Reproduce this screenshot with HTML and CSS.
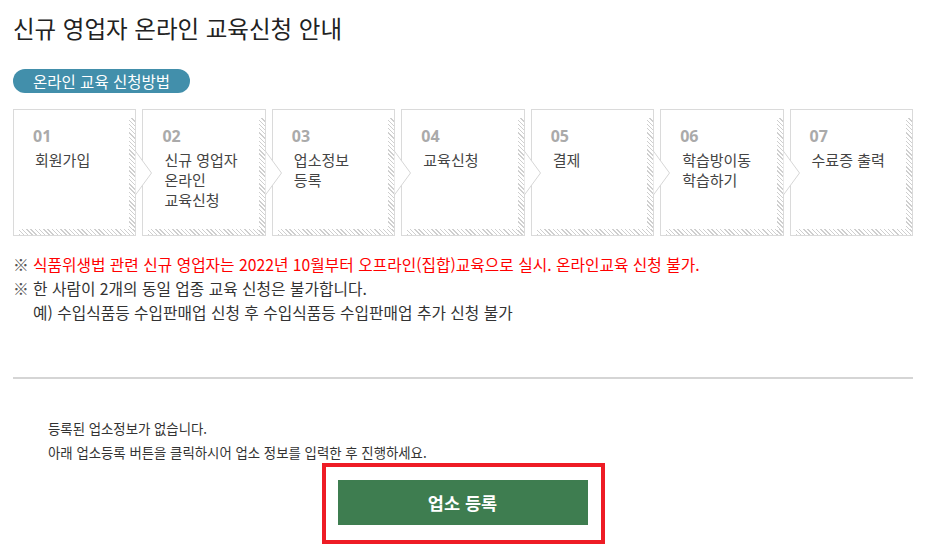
FILE: index.html
```html
<!DOCTYPE html>
<html lang="ko">
<head>
<meta charset="utf-8">
<title>신규 영업자 온라인 교육신청 안내</title>
<link rel="stylesheet" href="styles.css">
</head>
<body>
<div class="page">
  <h1 class="title">신규 영업자 온라인 교육신청 안내</h1>
  <div class="pill">온라인 교육 신청방법</div>

  <ol class="steps">
    <li class="step"><span class="num">01</span><p class="label">회원가입</p>
      <svg class="arrow" viewBox="0 0 18 46" width="18" height="46"><polygon points="0,0.5 16.5,23 0,45.5" fill="#fff" stroke="#d6d6d6" stroke-width="1"/></svg></li>
    <li class="step"><span class="num">02</span><p class="label">신규 영업자<br>온라인<br>교육신청</p>
      <svg class="arrow" viewBox="0 0 18 46" width="18" height="46"><polygon points="0,0.5 16.5,23 0,45.5" fill="#fff" stroke="#d6d6d6" stroke-width="1"/></svg></li>
    <li class="step"><span class="num">03</span><p class="label">업소정보<br>등록</p>
      <svg class="arrow" viewBox="0 0 18 46" width="18" height="46"><polygon points="0,0.5 16.5,23 0,45.5" fill="#fff" stroke="#d6d6d6" stroke-width="1"/></svg></li>
    <li class="step"><span class="num">04</span><p class="label">교육신청</p>
      <svg class="arrow" viewBox="0 0 18 46" width="18" height="46"><polygon points="0,0.5 16.5,23 0,45.5" fill="#fff" stroke="#d6d6d6" stroke-width="1"/></svg></li>
    <li class="step"><span class="num">05</span><p class="label">결제</p>
      <svg class="arrow" viewBox="0 0 18 46" width="18" height="46"><polygon points="0,0.5 16.5,23 0,45.5" fill="#fff" stroke="#d6d6d6" stroke-width="1"/></svg></li>
    <li class="step"><span class="num">06</span><p class="label">학습방이동<br>학습하기</p>
      <svg class="arrow" viewBox="0 0 18 46" width="18" height="46"><polygon points="0,0.5 16.5,23 0,45.5" fill="#fff" stroke="#d6d6d6" stroke-width="1"/></svg></li>
    <li class="step"><span class="num">07</span><p class="label">수료증 출력</p></li>
  </ol>

  <ul class="notes">
    <li class="note red"><span class="mark">※</span><span>식품위생법 관련 신규 영업자는 2022년 10월부터 오프라인(집합)교육으로 실시. 온라인교육 신청 불가.</span></li>
    <li class="note"><span class="mark">※</span><span>한 사람이 2개의 동일 업종 교육 신청은 불가합니다.<br>예) 수입식품등 수입판매업 신청 후 수입식품등 수입판매업 추가 신청 불가</span></li>
  </ul>

  <hr class="divider">

  <div class="empty">
    <p>등록된 업소정보가 없습니다.</p>
    <p>아래 업소등록 버튼을 클릭하시어 업소 정보를 입력한 후 진행하세요.</p>
  </div>

  <div class="actions">
    <div class="highlight">
      <button class="btn" type="button">업소 등록</button>
    </div>
  </div>
</div>
</body>
</html>
```

FILE: styles.css
```css
* { box-sizing: border-box; }
html, body { margin: 0; padding: 0; background: #fff; }
body {
  font-family: "Noto Sans CJK KR", "Noto Sans", sans-serif;
  color: #333;
}
.page {
  width: 931px;
  padding: 0 18px 0 13px;
}
.title {
  margin: 0;
  padding-top: 12px;
  font-size: 23.5px;
  line-height: 32px;
  font-weight: 400;
  color: #222;
}
.pill {
  display: inline-block;
  margin-top: 25px;
  height: 24px;
  line-height: 24px;
  padding: 0 20px 0 20px;
  border-radius: 12px;
  background: #428fab;
  color: #fff;
  font-size: 15.5px;
}
.steps {
  list-style: none;
  margin: 16px 0 0;
  padding: 0;
  width: 900px;
  display: grid;
  grid-template-columns: repeat(7, 1fr);
  column-gap: 6px;
}
.step {
  position: relative;
  height: 127px;
  border: 1px solid #dadada;
  padding: 16px 6px 0 19px;
  background: #fff;
}
.step::before {
  content: "";
  position: absolute;
  right: 0;
  top: 8px;
  bottom: 0;
  width: 6px;
  background: repeating-linear-gradient(45deg, #cfcfcf 0 1px, transparent 1px 3px);
}
.step::after {
  content: "";
  position: absolute;
  left: 5px;
  right: 0;
  bottom: 0;
  height: 6px;
  background: repeating-linear-gradient(45deg, #cfcfcf 0 1px, transparent 1px 3px);
}
.num {
  display: block;
  font-family: "Noto Sans", "Open Sans", sans-serif;
  font-size: 16px;
  line-height: 20px;
  font-weight: 700;
  color: #aaa;
}
.label {
  margin: 4px 0 0 2px;
  font-size: 15px;
  line-height: 20px;
  color: #444;
}
.arrow {
  position: absolute;
  right: -18px;
  top: 40px;
  z-index: 1;
  display: block;
}
.notes {
  list-style: none;
  margin: 17px 0 0;
  padding: 0;
}
.note {
  display: flex;
  font-size: 15.75px;
  line-height: 24px;
  color: #333;
}
.note.red { color: #ff0000; }
.mark {
  flex: 0 0 20px;
  color: #555;
}
.divider {
  margin: 52px 0 0;
  width: 900px;
  height: 2px;
  border: 0;
  background: #d5d5d5;
}
.empty {
  margin-top: 37px;
  padding-left: 35px;
  font-size: 13.4px;
  line-height: 24px;
  color: #333;
}
.empty p { margin: 0; }
.actions {
  width: 900px;
  margin-top: -1px;
  display: flex;
  justify-content: center;
}
.highlight {
  border: 4px solid #ee1c25;
  padding: 13px 13px 15px 12px;
}
.btn {
  display: block;
  width: 250px;
  height: 45px;
  border: 0;
  margin: 0;
  background: #3e7d50;
  color: #fff;
  font-family: "Noto Sans CJK KR", sans-serif;
  font-size: 17.5px;
  font-weight: 700;
  cursor: pointer;
}
```
